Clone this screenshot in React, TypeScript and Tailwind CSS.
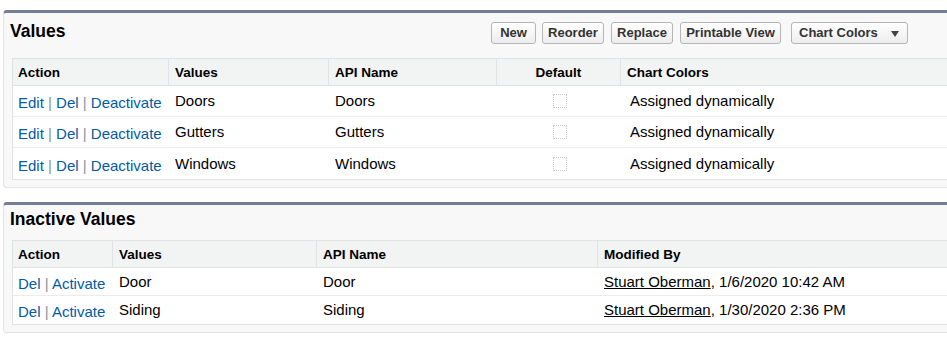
import React from 'react'

type Col = { label: string; width: string; center?: boolean }

const activeCols: Col[] = [
  { label: 'Action', width: 'w-[156px]' },
  { label: 'Values', width: 'w-[160px]' },
  { label: 'API Name', width: 'w-[168px]' },
  { label: 'Default', width: 'w-[124px]', center: true },
  { label: 'Chart Colors', width: 'flex-1' },
]

const inactiveCols: Col[] = [
  { label: 'Action', width: 'w-[100px]' },
  { label: 'Values', width: 'w-[204px]' },
  { label: 'API Name', width: 'w-[281px]' },
  { label: 'Modified By', width: 'flex-1' },
]

const activeRows = ['Doors', 'Gutters', 'Windows']

const inactiveRows = [
  { value: 'Door', when: '1/6/2020 10:42 AM' },
  { value: 'Siding', when: '1/30/2020 2:36 PM' },
]

function Panel({ children, className = '' }: { children: React.ReactNode; className?: string }) {
  return (
    <div
      className={`w-[1000px] rounded-[4px] border border-[#e3e3e3] border-t-[3px] border-t-[#747e96] bg-[#f8f8f8] pb-[7px] ${className}`}
    >
      {children}
    </div>
  )
}

function HeaderRow({ cols }: { cols: Col[] }) {
  return (
    <div className="flex h-[27px] items-center bg-[#f2f3f3] border-b border-[#e0e3e5] text-[13.5px] font-bold text-black">
      {cols.map((c, i) => (
        <div
          key={c.label}
          className={`${c.width} h-full flex items-center pt-[3px] border-r border-[#e0e3e5] ${
            c.center ? 'justify-center' : i === 0 ? 'pl-[5px]' : 'pl-[6px]'
          }`}
        >
          {c.label}
        </div>
      ))}
    </div>
  )
}

function Sep() {
  return <span className="text-[#8a93a6]"> | </span>
}

function Button({ children, width }: { children: React.ReactNode; width: string }) {
  return (
    <div
      className={`${width} h-[22px] flex items-center justify-center rounded-[3px] border border-[#b5b5b5] bg-linear-to-b from-white to-[#ededed] text-[13px] font-bold text-[#333]`}
    >
      {children}
    </div>
  )
}

export default function App() {
  return (
    <div className="w-[947px] h-[338px] overflow-hidden bg-white pt-[10px] pl-[3px] font-['Liberation_Sans',Arial,sans-serif]">
      {/* Active values */}
      <Panel>
        <div className="flex pt-[9px] pb-[14px]">
          <div className="w-[487px] pl-[6px] -mt-[2px] leading-[22px] text-[17.5px] font-bold text-black">
            Values
          </div>
          <div className="flex">
            <Button width="w-[45px]">New</Button>
            <div className="w-[6px]" />
            <Button width="w-[62px]">Reorder</Button>
            <div className="w-[7px]" />
            <Button width="w-[62px]">Replace</Button>
            <div className="w-[7px]" />
            <Button width="w-[101px]">Printable View</Button>
            <div className="w-[10px]" />
            <div className="w-[117px] h-[22px] flex items-center justify-between pl-[7px] pr-[8px] rounded-[3px] border border-[#b5b5b5] bg-linear-to-b from-white to-[#ededed] text-[13px] font-bold text-[#333]">
              Chart Colors
              <svg width="8" height="6" viewBox="0 0 8 6" className="mt-[1px]">
                <path d="M0 0h8L4 6z" fill="#444" />
              </svg>
            </div>
          </div>
        </div>

        <div className="mx-[8px] border border-[#e0e3e5] bg-white">
          <HeaderRow cols={activeCols} />
          {activeRows.map((v) => (
            <div key={v} className="flex h-[31px] items-center border-b border-[#ececec] last:border-b-0 text-[15px] text-black">
              <div className="w-[156px] pl-[5px] pt-[5px] text-[#015ba7]">
                Edit<Sep />Del<Sep />Deactivate
              </div>
              <div className="w-[160px] pl-[6px] pt-[1px]">{v}</div>
              <div className="w-[168px] pl-[6px] pt-[1px]">{v}</div>
              <div className="w-[124px] flex justify-center">
                <div className="w-[14px] h-[14px] border border-dotted border-[#c8c8c8] ml-[2px]" />
              </div>
              <div className="flex-1 pl-[9px] pt-[1px]">Assigned dynamically</div>
            </div>
          ))}
        </div>
      </Panel>

      {/* Inactive values */}
      <Panel className="mt-[14px]">
        <div className="h-[35px]">
          <div className="pl-[6px] leading-[28px] text-[17.5px] font-bold text-black">Inactive Values</div>
        </div>

        <div className="mx-[8px] border border-[#e0e3e5] bg-white">
          <HeaderRow cols={inactiveCols} />
          {inactiveRows.map((r) => (
            <div key={r.value} className="flex h-[28px] items-center border-b border-[#ececec] last:border-b-0 text-[15px] text-black">
              <div className="w-[100px] pl-[5px] pt-[5px] text-[#015ba7]">
                Del<Sep />Activate
              </div>
              <div className="w-[204px] pl-[6px] pt-[1px]">{r.value}</div>
              <div className="w-[281px] pl-[6px] pt-[1px]">{r.value}</div>
              <div className="flex-1 pl-[6px] pt-[1px]">
                <span className="underline">Stuart Oberman</span>, {r.when}
              </div>
            </div>
          ))}
        </div>
      </Panel>
    </div>
  )
}
